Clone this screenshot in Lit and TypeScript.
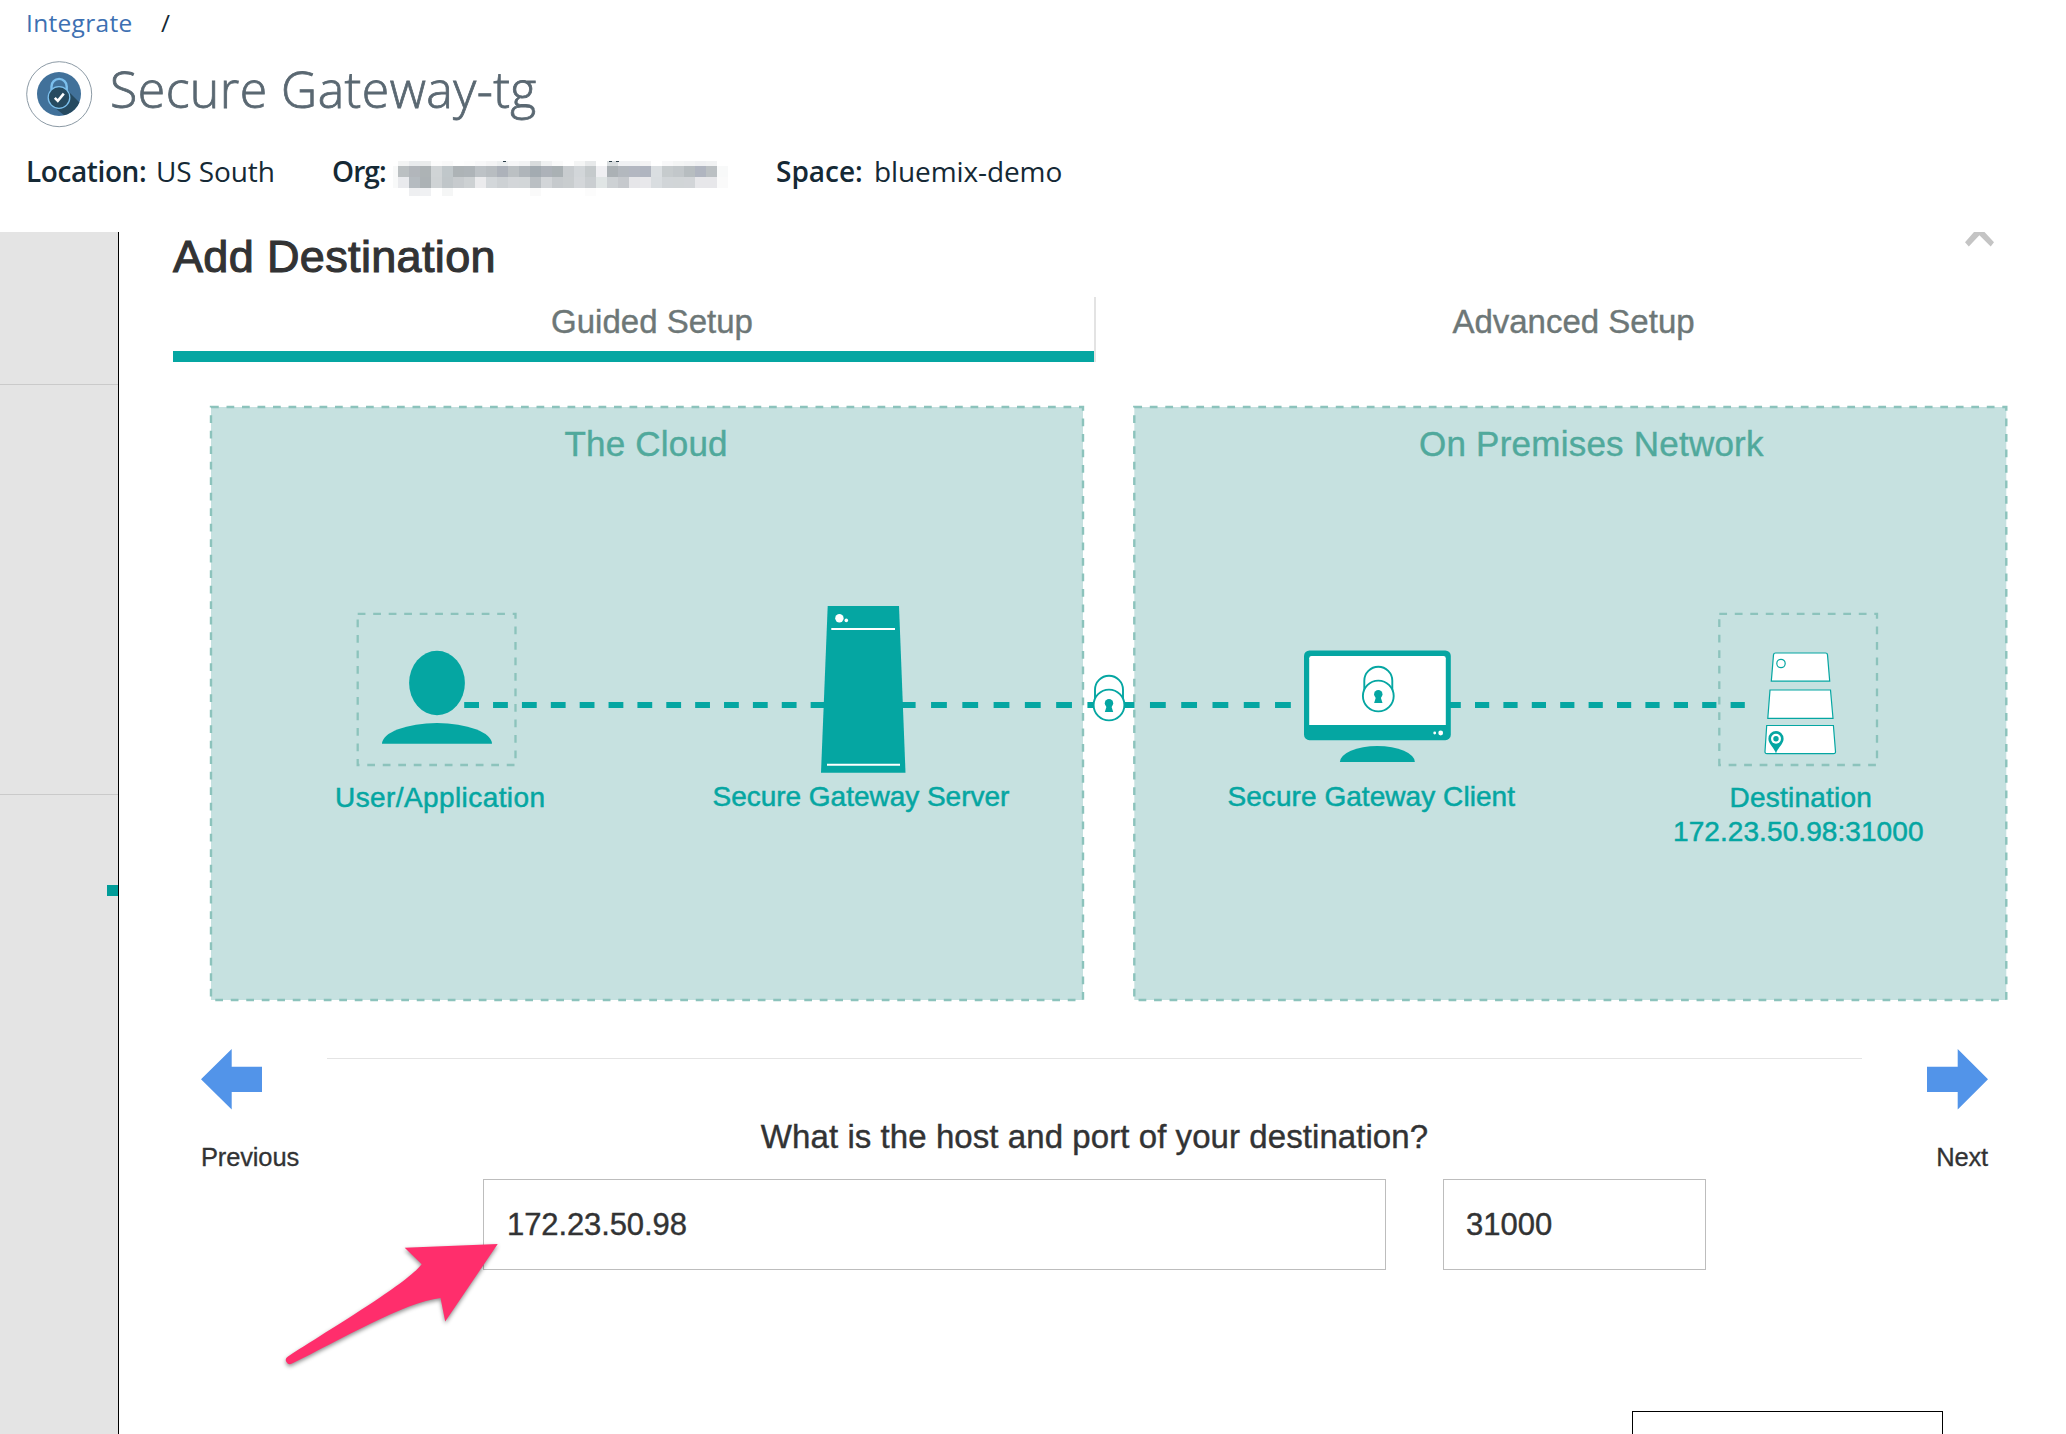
import { LitElement, html, svg, css } from "lit";
import { customElement } from "lit/decorators.js";

/* Rows of the redacted organisation name: [y, height, cell colours]. */
const MOSAIC: Array<[number, number, string]> = [
  [0, 5, "f3f4f4 e9ebed eaecec fcfcfc f9f9f9 fefefe fcfcfc f8f8f9 f4f4f5 edeff0 f6f6f7 f2f3f4 d9dcdd f0f1f2 fafafa ffffff f4f5f5 e7e9ea ffffff d9dddf f0f1f3 f0f1f3 f3f3f4 ffffff f8f8f9 f4f5f5 f2f3f4 eff0f2 f1f2f3 ffffff"],
  [5, 11, "bbc0c2 b2b6bb adb3b5 d0d4d6 c0c7ca adb3b6 aeb4b8 bdc2c6 b8bdc1 adb2ba bbc0c3 afb5ba a3abb1 adb2b9 aab1b4 c8cccf d2d6d9 c5cacc efeff2 abb1b5 b3b8be b3b7c1 b0b5c0 dadee1 c6cbcd c2c7ca b7bdc0 b0b5c0 bbc0c3 f8f9f9"],
  [16, 11, "e9eaed b5bbc0 acb2b5 cfd3d5 c0c6c9 c7cbce cdd1d3 ebebed d3d7da cdd1d4 d3d6d9 d2d6d8 babfc3 d2d5d8 c6cacd c9cdcf d4d7da caced1 e0e5e5 cdd1d4 c6c9cd e6e6e9 e8e8eb d9dde0 d1d5d8 d1d5d7 d2d5d8 e7e7ea e7e7ea fafafa"],
  [27, 8, "ffffff eeeff1 f0f1f3 ffffff f5f6f6 ffffff ffffff ffffff ffffff ffffff ffffff ffffff fafafa ffffff ffffff ffffff ffffff fcfcfc"],
];

@customElement("service-header")
export class ServiceHeader extends LitElement {
  static styles = css`
    :host {
      display: flex;
      flex-direction: column;
      height: 232px;
      box-sizing: border-box;
      padding: 3px 0 0 26px;
      font-family: "Open Sans", sans-serif;
      color: #152935;
      white-space: nowrap;
    }
    .crumbs { display: flex; height: 40px; line-height: 40px; font-size: 24.5px; }
    .crumb { width: 135px; color: #3d70b2; letter-spacing: 0.3px; }
    .title-row { display: flex; align-items: center; height: 70px; margin-top: 16px; gap: 17px; }
    .badge { display: block; width: 67px; height: 67px; }
    .title {
      margin: 0;
      padding-bottom: 10px;
      font-size: 50px;
      font-weight: 300;
      line-height: 64px;
      color: #5a6872;
      letter-spacing: 0.45px;
      -webkit-text-stroke: 0.8px #5a6872;
    }
    .meta { display: flex; height: 40px; margin-top: 22px; line-height: 40px; font-size: 28px; letter-spacing: -0.1px; }
    .key { font-weight: 600; }
    .k-loc { width: 130px; letter-spacing: -0.4px; }
    .v-loc { width: 176px; }
    .k-org { width: 61px; letter-spacing: -0.9px; }
    .k-space { width: 98px; letter-spacing: 0; }
    .mosaic { display: block; width: 336px; height: 36px; margin: 10px 47px 0 0; }
  `;

  render() {
    return html`
      <nav class="crumbs"><span class="crumb">Integrate</span><span>/</span></nav>
      <div class="title-row">
        <svg class="badge" viewBox="0 0 67 67">
          <defs><clipPath id="disc"><circle cx="33" cy="33" r="22" /></clipPath></defs>
          <circle cx="33.2" cy="33.2" r="32.5" fill="#fff" stroke="#8c9aa5" stroke-width="1" />
          <circle cx="33" cy="33" r="22" fill="#41719a" />
          <path d="M41 29 L62 50 L48 62 L24 43 Z" fill="#264a60" clip-path="url(#disc)" />
          <path d="M25.5 32 V25.5 a7.6 7.6 0 0 1 15.2 0 V32" fill="none" stroke="#7cc0ee" stroke-width="2.4" />
          <circle cx="33" cy="36.5" r="10.8" fill="#264a60" stroke="#7cc0ee" stroke-width="1.3" />
          <path d="M28.8 36.8 l3 3 l6 -7.2" fill="none" stroke="#fff" stroke-width="2.6" />
        </svg>
        <h1 class="title">Secure Gateway-tg</h1>
      </div>
      <div class="meta">
        <span class="key k-loc">Location:</span><span class="v-loc">US South</span>
        <span class="key k-org">Org:</span>
        <svg class="mosaic" viewBox="0 0 336 36" shape-rendering="crispEdges">
          <rect x="0" y="5" width="5" height="22" fill="#f8f9f9" />
          ${MOSAIC.map(([y, h, row]) => row.split(" ").map((c, i) => svg`
            <rect x=${5 + i * 11} y=${y} width="11" height=${h} fill=${"#" + c} />`))}
          <path d="M110 -1 h3 v1.6 h-3 z M215.500 -1 h3 v1.600 h-3 z M222.500 -1 h3 v1.600 h-3 z" fill="#2c3e49" />
        </svg>
        <span class="key k-space">Space:</span><span>bluemix-demo</span>
      </div>
    `;
  }
}

@customElement("gateway-diagram")
export class GatewayDiagram extends LitElement {
  static styles = css`
    :host { display: block; height: 687px; }
    .canvas { display: block; width: 1947px; height: 687px; }
    .zone { fill: #c6e1e0; stroke: #8cc3bc; stroke-width: 2.4; stroke-dasharray: 7.75; }
    .slot { fill: none; stroke: #8cc3bc; stroke-width: 2.3; stroke-dasharray: 7.75; }
    .link { stroke: #05a6a2; stroke-width: 6; fill: none; }
    .solid { fill: #05a6a2; }
    .line { fill: #fff; stroke: #05a6a2; stroke-width: 1.2; }
    .lock { fill: #fff; stroke: #05a6a2; stroke-width: 1.9; }
    .hl { stroke: #fff; stroke-width: 1.9; }
    .white { fill: #fff; }
    .zone-name { font: 35px "Liberation Sans", Arial, sans-serif; fill: #50a99c; stroke: #50a99c; stroke-width: 0.4; }
    .label { font: 28px "Liberation Sans", Arial, sans-serif; fill: #05a6a2; stroke: #05a6a2; stroke-width: 0.5; }
  `;

  private lock(cx: number, cy: number) {
    return svg`
      <g transform="translate(${cx} ${cy})">
        <path class="lock" d="M-14 -5 V-15.300 a14 14 0 0 1 28 0 V-5" />
        <circle class="lock" r="15.400" />
        <circle class="solid" cy="-1.700" r="4.200" />
        <path class="solid" d="M-2 0 H2 L4.200 7 H-4.200 Z" />
      </g>`;
  }

  render() {
    return html`
      <svg class="canvas" viewBox="119 362 1947 687">
        <rect class="zone" x="211" y="407" width="872" height="593" />
        <rect class="zone" x="1134.300" y="407" width="872" height="593" />
        <text class="zone-name" x="564.500" y="456" textLength="163">The Cloud</text>
        <text class="zone-name" x="1419" y="456" textLength="344.500">On Premises Network</text>

        <rect class="slot" x="357.700" y="613.800" width="157.800" height="151.200" />
        <rect class="slot" x="1719.300" y="613.800" width="157.700" height="151.200" />

        <path class="link" d="M464.200 705 H830" stroke-dasharray="14.800 14.070" />
        <path class="link" d="M899.800 705 H1306" stroke-dasharray="15.800 15.470" />
        <path class="link" d="M1446.600 705 H1745" stroke-dasharray="14.200 14.200" />

        <ellipse class="solid" cx="437" cy="683" rx="27.900" ry="32.200" />
        <path class="solid" d="M382 743.800 a55 20.700 0 0 1 110 0 Z" />

        <path class="solid" d="M827.700 606 H899 L905.500 772.700 H821 Z" />
        <circle class="white" cx="839.400" cy="618.300" r="4.200" />
        <circle class="white" cx="846.300" cy="620.400" r="1.800" />
        <path class="hl" d="M831.300 629 H895 M827 764.700 H900" />

        ${this.lock(1109, 705)}

        <rect class="solid" x="1304" y="650.400" width="146.800" height="89.800" rx="5.500" />
        <path class="white" d="M1311.500 656 H1443.500 q2.300 0 2.300 2.300 V725 H1309.200 V658.300 q0 -2.300 2.300 -2.300 Z" />
        <circle class="white" cx="1440.700" cy="733" r="2.400" />
        <circle class="white" cx="1434.700" cy="733" r="1.400" />
        <path class="solid" d="M1339.900 762 a37.500 16 0 0 1 75 0 Z" />
        ${this.lock(1378.3, 696)}

        <path class="line" d="M1775.600 653 H1825.500 q1.900 0 2 1.900 L1829.700 681.200 H1771.300 L1773.500 654.900 q.2 -1.900 2.100 -1.900 Z" />
        <circle class="line" cx="1781" cy="663.500" r="4.200" />
        <path class="line" d="M1770 690 H1830.500 L1833 718.300 H1767.800 Z" />
        <path class="line" d="M1766.700 725.500 H1833.400 L1835.500 751.500 q.1 2.200 -2 2.200 H1767 q-2.100 0 -2 -2.200 Z" />
        <path class="solid" d="M1776 753.500 C1774.500 748 1768.400 744 1768.400 738.700 a7.600 7.600 0 0 1 15.200 0 C1783.600 744 1777.500 748 1776 753.500 Z" />
        <circle class="white" cx="1776" cy="738.700" r="5" />
        <circle class="solid" cx="1776" cy="738.700" r="2.700" />

        <text class="label" x="335" y="807" textLength="210">User/Application</text>
        <text class="label" x="712.500" y="806" textLength="296.800">Secure Gateway Server</text>
        <text class="label" x="1227.500" y="806" textLength="287.500">Secure Gateway Client</text>
        <text class="label" x="1729.500" y="807" textLength="142.300">Destination</text>
        <text class="label" x="1673" y="840.700" textLength="250.500">172.23.50.98:31000</text>
      </svg>
    `;
  }
}

@customElement("app-root")
export class AppRoot extends LitElement {
  static styles = css`
    :host {
      display: block;
      position: relative;
      width: 2066px;
      height: 1434px;
      overflow: hidden;
      background: #fff;
      font-family: "Liberation Sans", Arial, sans-serif;
      color: #323334;
    }
    .body { display: flex; height: 1202px; }
    .side {
      display: flex;
      flex-direction: column;
      width: 118px;
      background: #e4e4e4;
      border-right: 1px solid #000;
    }
    .side-row { box-sizing: border-box; border-bottom: 1px solid #cacaca; }
    .first { height: 153px; }
    .second { height: 410px; }
    .marker { width: 11px; height: 11px; margin: 90px 0 0 107px; background: #009c98; }
    .panel { flex: 1; min-width: 0; }
    .head { display: flex; justify-content: space-between; height: 65px; padding: 0 72px 0 54px; }
    .heading { margin: -1.5px 0 0; font-size: 45px; font-weight: 400; line-height: 52px; letter-spacing: 0.35px; -webkit-text-stroke: 1.1px #323334; }
    .chevron { display: block; width: 29px; height: 15px; }
    .tabs { display: flex; height: 65px; padding-left: 54px; }
    .tab {
      box-sizing: border-box;
      width: 921px;
      padding-left: 37px;
      text-align: center;
      font-size: 33px;
      line-height: 50px;
      color: #6d7777;
      -webkit-text-stroke: 0.4px #6d7777;
    }
    .active { border-bottom: 11px solid #05a6a2; }
    .split { width: 2px; background: #e3e3e3; }
    .split + .tab { padding-left: 34px; }
    .wizard { display: grid; grid-template-columns: 126px 1535px 126px; padding-left: 82px; height: 221px; }
    .nav { display: flex; flex-direction: column; font-size: 25.5px; line-height: 30px; letter-spacing: -0.15px; -webkit-text-stroke: 0.3px #323334; }
    .next { align-items: flex-end; }
    .arrow { display: block; width: 61px; height: 61px; margin-bottom: 32px; fill: #5294e9; }
    .step { margin-top: 9px; border-top: 1px solid #e4e4e4; }
    .question { margin: 58px 0 22px; text-align: center; font-size: 33px; line-height: 40px; letter-spacing: 0.07px; -webkit-text-stroke: 0.4px #323334; }
    .fields { display: flex; gap: 57px; padding-left: 156px; }
    .field {
      box-sizing: border-box;
      height: 91px;
      padding: 0 22px;
      border: 1px solid #bdbdbd;
      font-size: 31px;
      line-height: 89px;
      -webkit-text-stroke: 0.4px #323334;
    }
    .host { width: 903px; padding-left: 23px; letter-spacing: -0.1px; }
    .port { width: 263px; }
    .cutoff { box-sizing: border-box; width: 311px; height: 60px; margin: 141px 0 0 1513px; border: 1px solid #000; }
    .pointer { position: absolute; left: 270px; top: 1230px; width: 240px; height: 150px; filter: drop-shadow(0 2px 2px rgba(0, 0, 0, 0.45)); }
  `;

  render() {
    return html`
      <service-header></service-header>
      <div class="body">
        <aside class="side">
          <div class="side-row first"></div>
          <div class="side-row second"></div>
          <div class="marker"></div>
        </aside>
        <main class="panel">
          <div class="head">
            <h2 class="heading">Add Destination</h2>
            <svg class="chevron" viewBox="0 0 29 15">
              <path d="M0 10.200 L9 0 H19.500 L29 10.200 L25.700 14.400 L14.400 3.200 L3.800 14.400 Z" fill="#c4c4c4" />
            </svg>
          </div>
          <div class="tabs">
            <div class="tab active">Guided Setup</div>
            <div class="split"></div>
            <div class="tab">Advanced Setup</div>
          </div>
          <gateway-diagram></gateway-diagram>
          <div class="wizard">
            <div class="nav">
              <svg class="arrow" viewBox="0 0 61 61"><path d="M0 30.300 L30.700 0 V17.700 H61 V43 H30.700 V60.600 Z" /></svg>
              <span>Previous</span>
            </div>
            <div class="step">
              <p class="question">What is the host and port of your destination?</p>
              <div class="fields">
                <div class="field host">172.23.50.98</div>
                <div class="field port">31000</div>
              </div>
            </div>
            <div class="nav next">
              <svg class="arrow" viewBox="0 0 61 61"><path d="M61 30.300 L30.700 0 V17.700 H0 V43 H30.700 V60.600 Z" /></svg>
              <span>Next</span>
            </div>
          </div>
          <div class="cutoff"></div>
        </main>
      </div>
      <svg class="pointer" viewBox="270 1230 240 150">
        <path
          fill="#ff2e6c"
          d="M497.700 1244 L404.700 1247.800 L421.700 1264.300 C407 1283 345 1320 288 1356.500 A4 4 0 0 0 292 1363.600 C340 1340 405 1302 440.500 1298 L445.200 1321.500 Z"
        />
      </svg>
    `;
  }
}
